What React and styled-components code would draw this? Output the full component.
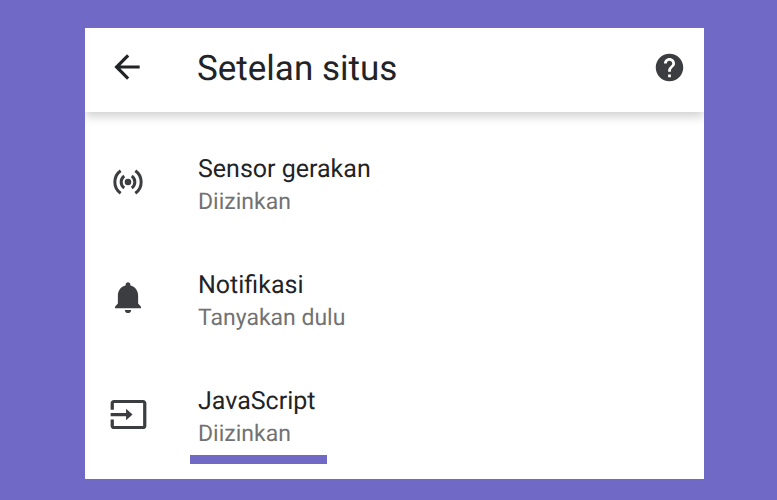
import styled, { createGlobalStyle } from "styled-components";

const GlobalStyle = createGlobalStyle`
    * {
        box-sizing: border-box;
    }
    body {
        margin: 0;
        background: #7169c6;
        font-family: Roboto, sans-serif;
        color: #222326;
        text-rendering: geometricPrecision;
    }
`;
const Page = styled.main`
    padding: 28px 73px 21px 85px;
`;
const Panel = styled.section`
    background: #fff;
`;
const Header = styled.header`
    display: flex;
    align-items: center;
    height: 84px;
    padding: 0 18px 6px 23px;
    box-shadow: 0 4px 10px rgba(0, 0, 0, 0.2);
    clip-path: inset(0 0 -16px 0);
`;
const IconButton = styled.button`
    display: flex;
    padding: 0;
    border: 0;
    background: none;
    color: ${props => props.$color};
    cursor: pointer;
`;
const Title = styled.h1`
    flex: 1;
    margin: 0;
    padding: 4px 0 0 51px;
    font-size: 35px;
    line-height: 40px;
    font-weight: 400;
`;
const List = styled.ul`
    margin: 0;
    padding: 41px 0 15px;
    list-style: none;
    display: flex;
    flex-direction: column;
    gap: 37px;
`;
const Row = styled.li`
    display: flex;
    align-items: flex-start;
`;
const RowIcon = styled.span`
    display: flex;
    justify-content: center;
    align-items: center;
    width: 86px;
    height: 58px;
    margin-right: 19px;
    color: #3c3d40;
`;
const RowText = styled.div`
    padding: 0 12px 7px 8px;
    border-bottom: 9px solid ${props => props.$marked ? "#7169c6" : "transparent"};
`;
const Name = styled.div`
    font-size: 25px;
    line-height: 34px;
`;
const Status = styled.div`
    font-size: 23px;
    line-height: 29px;
    color: #727272;
`;

const Icon = ({ size, children }) => (
    <svg width={size} height={size} viewBox="0 0 24 24" fill="currentColor" aria-hidden="true">
        {children}
    </svg>
);

const SensorIcon = () => (
    <Icon size={36}>
        <circle cx="12" cy="12" r="2.2" />
        <g fill="none" stroke="currentColor" strokeWidth="2">
            <path d="M9.5 8a4.9 4.9 0 0 0 0 8M14.5 8a4.9 4.9 0 0 1 0 8" />
            <path d="M7.1 4.5a9.2 9.2 0 0 0 0 15M16.9 4.5a9.2 9.2 0 0 1 0 15" />
        </g>
    </Icon>
);

const BellIcon = () => (
    <Icon size={38}>
        <path d="M12 21.5c1.1 0 2-.9 2-2h-4c0 1.1.89 2 2 2zM18.4 15.5v-5c0-3.07-1.94-5.64-4.9-6.32V3.5c0-.83-.67-1.5-1.5-1.5s-1.5.67-1.5 1.5v.68C7.53 4.86 5.6 7.42 5.6 10.5v5l-1.8 2v1h16.4v-1z" />
    </Icon>
);

const InputIcon = () => (
    <Icon size={39}>
        <path d="M21 3.01H3c-1.1 0-2 .9-2 2V9h2V4.99h18v14.03H3V15H1v4.01c0 1.1.9 1.98 2 1.98h18c1.1 0 2-.88 2-1.98v-14c0-1.11-.9-2-2-2zM10.5 15.5L14.5 12l-4-3.5V11H1v2h9.5v2.5z" />
    </Icon>
);

const settings = [
    { name: "Sensor gerakan", status: "Diizinkan", icon: <SensorIcon /> },
    { name: "Notifikasi", status: "Tanyakan dulu", icon: <BellIcon /> },
    { name: "JavaScript", status: "Diizinkan", icon: <InputIcon />, marked: true },
];

export default function App() {
    return (
        <>
            <GlobalStyle />
            <Page>
                <Panel>
                    <Header>
                        <IconButton type="button" aria-label="Kembali" $color="#222326">
                            <Icon size={38}>
                                <path d="M20 11H7.83l5.59-5.59L12 4l-8 8 8 8 1.41-1.41L7.83 13H20v-2z" />
                            </Icon>
                        </IconButton>
                        <Title>Setelan situs</Title>
                        <IconButton type="button" aria-label="Bantuan" $color="#3c3d40">
                            <Icon size={33}>
                                <path d="M12 2C6.48 2 2 6.48 2 12s4.48 10 10 10 10-4.48 10-10S17.52 2 12 2zm1 17h-2v-2h2v2zm2.07-7.75l-.9.92C13.45 12.9 13 13.5 13 15h-2v-.5c0-1.1.45-2.1 1.17-2.83l1.24-1.26c.37-.36.59-.86.59-1.41 0-1.1-.9-2-2-2s-2 .9-2 2H8c0-2.21 1.79-4 4-4s4 1.79 4 4c0 .88-.36 1.68-.93 2.25z" />
                            </Icon>
                        </IconButton>
                    </Header>
                    <List>
                        {settings.map(setting => (
                            <Row key={setting.name}>
                                <RowIcon>{setting.icon}</RowIcon>
                                <RowText $marked={setting.marked}>
                                    <Name>{setting.name}</Name>
                                    <Status>{setting.status}</Status>
                                </RowText>
                            </Row>
                        ))}
                    </List>
                </Panel>
            </Page>
        </>
    );
}
